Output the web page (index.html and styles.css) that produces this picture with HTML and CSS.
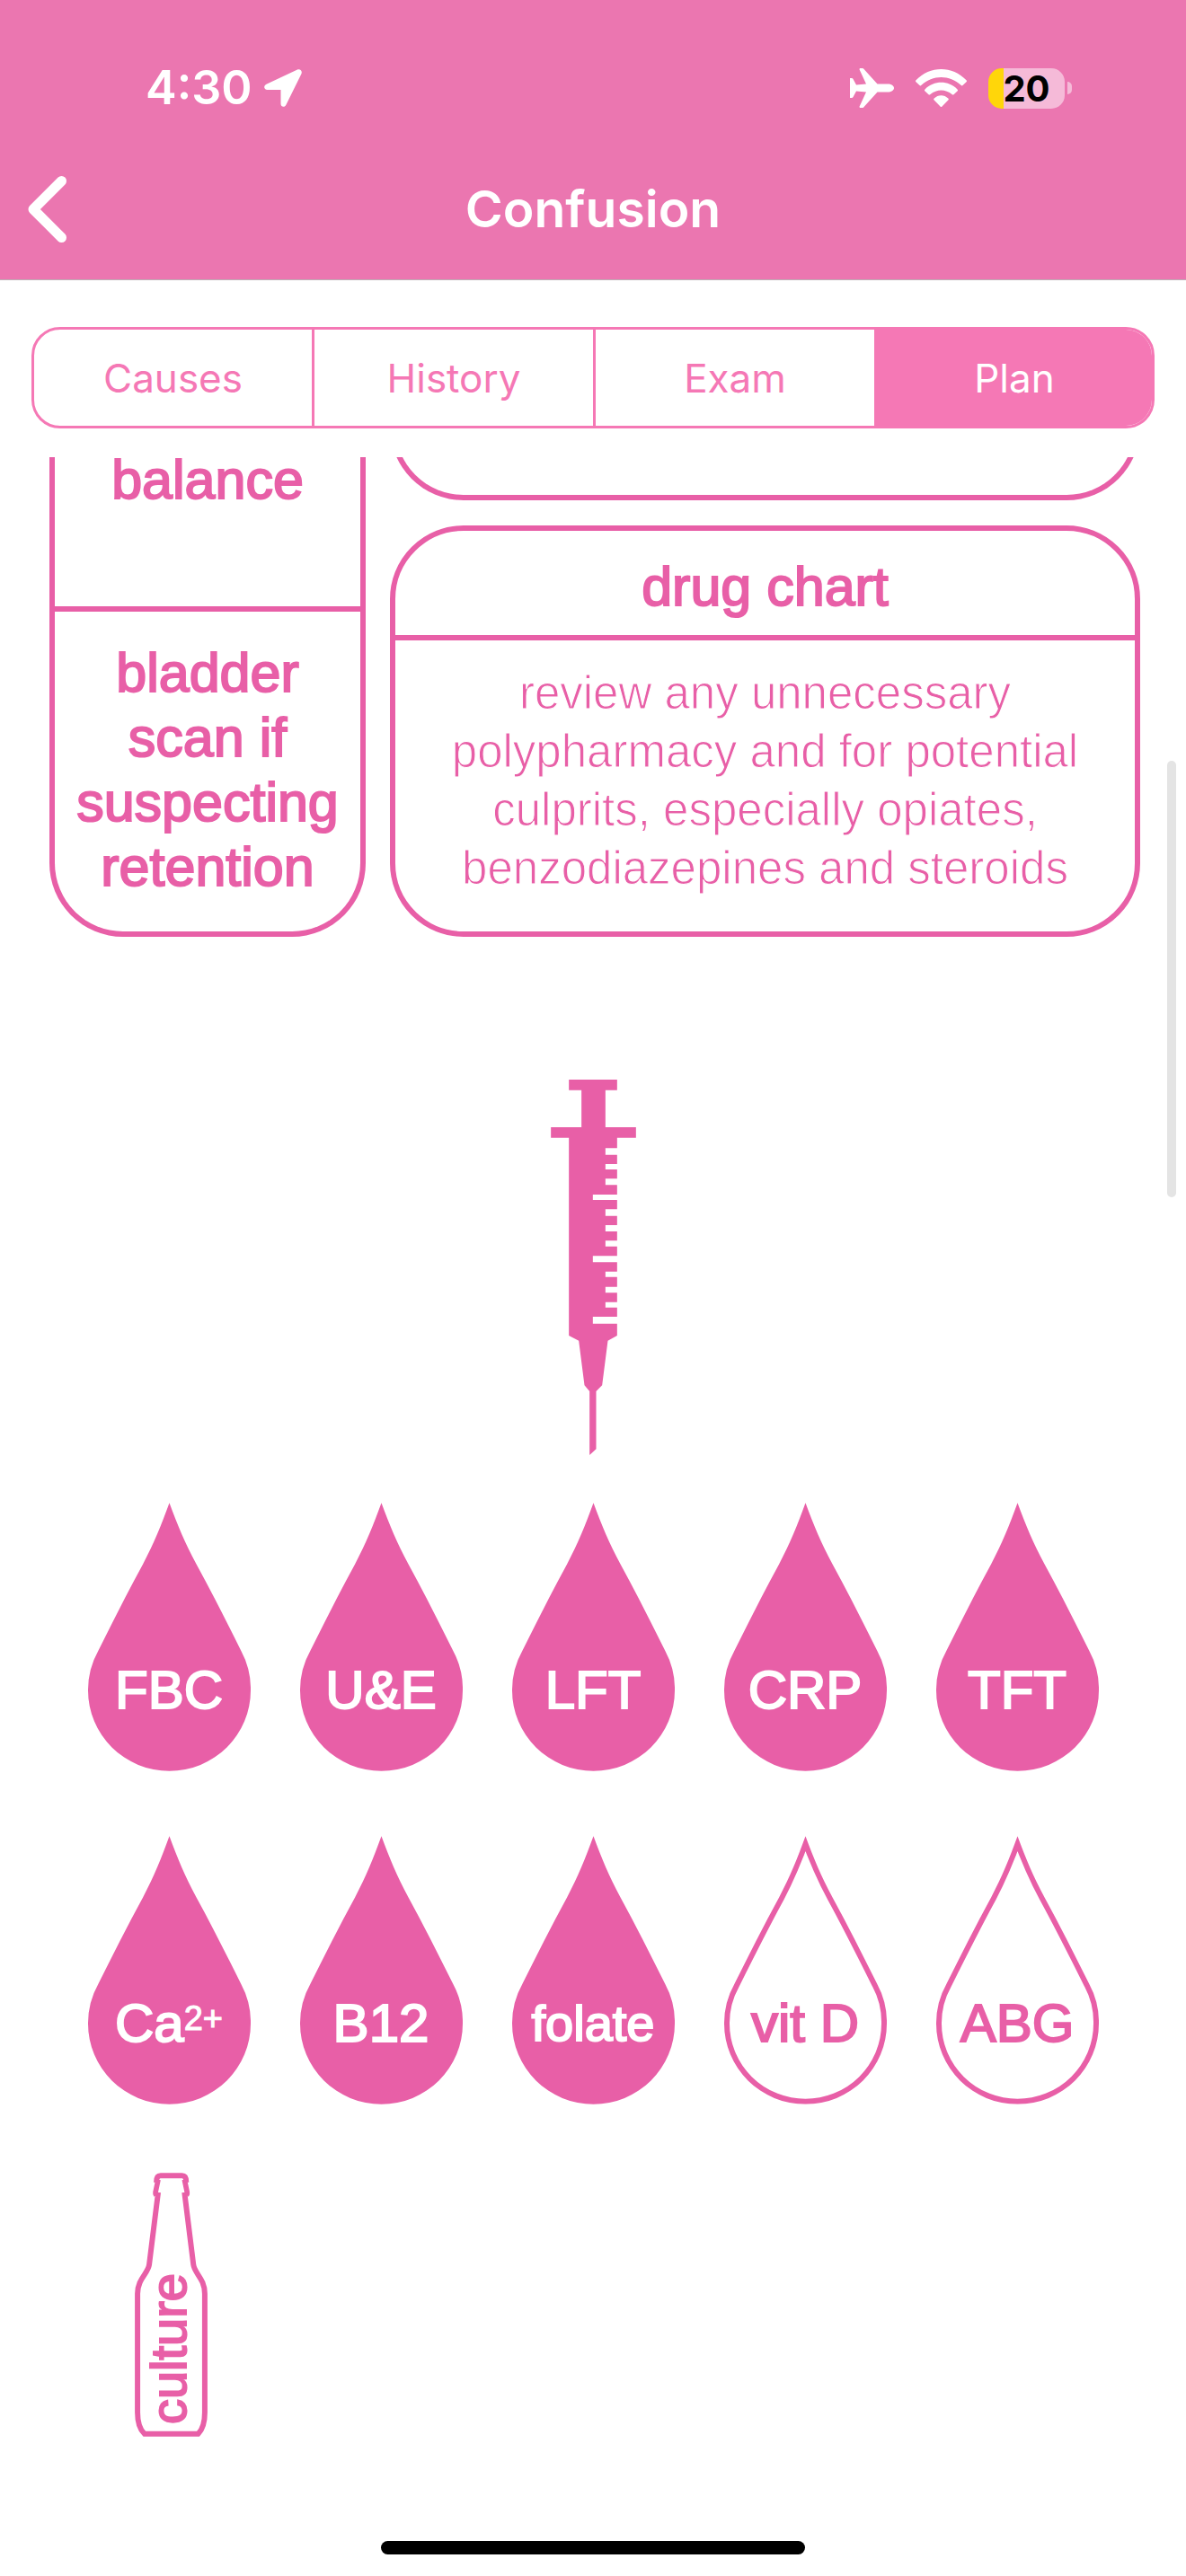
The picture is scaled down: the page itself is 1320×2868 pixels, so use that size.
FILE: index.html
```html
<!DOCTYPE html>
<html lang="en">
<head>
<meta charset="utf-8">
<meta name="viewport" content="width=device-width, initial-scale=1">
<title>Confusion</title>
<link rel="stylesheet" href="styles.css">
</head>
<body>
<svg class="defs" width="0" height="0" aria-hidden="true">
  <defs>
    <path id="drop-shape" d="M385 68C412 142 438 204 475 272C526 365 575 463 625 563A272 270 0 0 1 657 695A272 270 0 0 1 113 695A272 270 0 0 1 147 563C197 463 246 365 297 272C334 202 358 142 385 68Z"/>
    <clipPath id="drop-clip"><use href="#drop-shape"/></clipPath>
    <symbol id="drop-filled" viewBox="113 68 544 897"><use href="#drop-shape" fill="currentColor"/></symbol>
    <symbol id="drop-outline" viewBox="113 68 544 897"><use href="#drop-shape" fill="none" stroke="currentColor" stroke-width="36" stroke-miterlimit="10" clip-path="url(#drop-clip)"/></symbol>
  </defs>
</svg>

<header class="header">
  <div class="status">
    <div class="status-left">
      <time class="clock">4:30</time>
      <svg class="icon-location" viewBox="0 0 42 42" aria-hidden="true"><path d="M36.500 .7L2.500 16.800C-1.200 18.700 -.2 23 3.500 23H18.500V38.500C18.500 42.300 23 43 24.500 39.500L41.300 5.500C43 1.800 40 -.9 36.500 .7Z" fill="currentColor"/></svg>
    </div>
    <div class="status-right">
      <svg class="icon-plane" viewBox="0 0 49 44" aria-hidden="true"><path d="M10.500 1.200C10.500 .4 11 0 12 0H13.500C14.600 0 15.300 .5 16 1.500L30.500 17.500H42C46 17.500 49 19.500 49 22S46 26.500 42 26.500H30.500L16 42.500C15.300 43.500 14.600 44 13.500 44H12C11 44 10.500 43.600 10.500 42.800L18 26.500L7 25.500L3.500 32C3 32.800 2.500 33 1.500 33H0V11H1.500C2.500 11 3 11.200 3.500 12L7 18.500L18 17.500Z" fill="currentColor"/></svg>
      <svg class="icon-wifi" viewBox="0 0 57 42" aria-hidden="true"><g fill="currentColor"><path d="M.5 12.300C16 -4.100 41 -4.100 56.500 12.300C57.200 13 57.100 13.700 56.500 14.300L52.500 18C51.800 18.600 51.200 18.500 50.500 17.800C38 6 19 6 6.500 17.800C5.800 18.500 5.200 18.600 4.500 18L.5 14.300C-.1 13.700 -.2 13 .5 12.300Z"/><path d="M10.500 22.500C20.500 12.300 36.500 12.300 46.500 22.500C47.200 23.200 47.200 23.900 46.500 24.500L42.500 28.200C41.800 28.800 41.200 28.700 40.500 28C33.500 22 23.500 22 16.500 28C15.800 28.700 15.200 28.800 14.500 28.200L10.500 24.500C9.800 23.900 9.800 23.200 10.500 22.500Z"/><path d="M20.700 32.500C25 28 32 28 36.300 32.500C37 33.200 37 33.900 36.300 34.600L29.500 41.400C28.800 42.100 28.200 42.100 27.500 41.400L20.700 34.600C20 33.900 20 33.200 20.700 32.500Z"/></g></svg>
      <div class="battery"><span class="battery-body">20</span><span class="battery-nub"></span></div>
    </div>
  </div>
  <div class="titlebar">
    <button class="back" type="button" aria-label="Back">
      <svg class="icon-back" viewBox="0 0 43 74" aria-hidden="true"><path d="M37.500 5.500L6 37L37.500 68.500" fill="none" stroke="currentColor" stroke-width="11" stroke-linecap="round" stroke-linejoin="round"/></svg>
    </button>
    <h1 class="title">Confusion</h1>
  </div>
</header>

<nav class="tabs" aria-label="Sections">
  <button class="tab" type="button">Causes</button>
  <button class="tab" type="button">History</button>
  <button class="tab" type="button">Exam</button>
  <button class="tab tab-active" type="button" aria-current="page">Plan</button>
</nav>

<main class="content">
  <section class="cards">
    <article class="card card-side">
      <p class="card-item">balance</p>
      <p class="card-item card-item-last">bladder scan if suspecting retention</p>
    </article>
    <div class="card-column">
      <div class="card card-previous"></div>
      <article class="card">
        <h2 class="card-title">drug chart</h2>
        <p class="card-text">review any unnecessary polypharmacy and for potential culprits, especially opiates, benzodiazepines and steroids</p>
      </article>
    </div>
  </section>

  <svg class="syringe" viewBox="100 66 284 1254" role="img" aria-label="Blood tests"><path fill="currentColor" d="M160 66H321V101H282V225H384V260H321V295H282V317H321V348H282V366H321V397H282V418H321V450H240V468H321V499H282V521H321V552H282V573H321V604H282V623H321V655H240V676H321V707H282V725H321V758H282V778H321V809H282V827H321V858H240V881H321V921L290 938L271 1087L251 1107V1300L229 1320V1107L212 1087L193 938L160 921V260H100V225H202V101H160Z"/></svg>

  <ul class="tests">
    <li class="test"><svg class="drop" aria-hidden="true"><use href="#drop-filled"/></svg><span class="label">FBC</span></li>
    <li class="test"><svg class="drop" aria-hidden="true"><use href="#drop-filled"/></svg><span class="label">U&amp;E</span></li>
    <li class="test"><svg class="drop" aria-hidden="true"><use href="#drop-filled"/></svg><span class="label">LFT</span></li>
    <li class="test"><svg class="drop" aria-hidden="true"><use href="#drop-filled"/></svg><span class="label">CRP</span></li>
    <li class="test"><svg class="drop" aria-hidden="true"><use href="#drop-filled"/></svg><span class="label">TFT</span></li>
    <li class="test"><svg class="drop" aria-hidden="true"><use href="#drop-filled"/></svg><span class="label">Ca<sup class="charge">2+</sup></span></li>
    <li class="test"><svg class="drop" aria-hidden="true"><use href="#drop-filled"/></svg><span class="label">B12</span></li>
    <li class="test"><svg class="drop" aria-hidden="true"><use href="#drop-filled"/></svg><span class="label label-small">folate</span></li>
    <li class="test"><svg class="drop" aria-hidden="true"><use href="#drop-outline"/></svg><span class="label label-outline">vit D</span></li>
    <li class="test"><svg class="drop" aria-hidden="true"><use href="#drop-outline"/></svg><span class="label label-outline">ABG</span></li>
    <li class="test">
      <svg class="bottle" viewBox="150 87 243 884" aria-hidden="true"><g fill="none" stroke="currentColor" stroke-width="18"><path d="M222 119C222 104 226 97 236 97H308C318 97 322 104 322 119"/><path d="M228 110L219 153Q218 158 221 162M316 110L325 153Q326 158 323 162" stroke-width="17"/><path d="M228 153L198 395C194 425 159 442 159 492V890C159 922 167 947 182 961H362C376 947 384 922 384 890V492C384 442 350 425 346 395L316 153"/></g></svg>
      <span class="bottle-label">culture</span>
    </li>
  </ul>
</main>

<div class="scrollbar" aria-hidden="true"></div>
<footer class="home"><div class="home-bar"></div></footer>
</body>
</html>
```
FILE: styles.css
```css
:root {
  --pink: #e85fa7;
  --pink-light: #f578b5;
  --pink-bar: #eb76b0;
  --helvetica: "Liberation Sans", Arial, sans-serif;
  --system: Inter, sans-serif;
}

* {
  box-sizing: border-box;
}

body {
  position: relative;
  display: flex;
  flex-direction: column;
  min-height: 100vh;
  margin: 0;
  background: #fff;
  color: var(--pink);
  font-family: var(--helvetica);
}

h1, h2, p, ul {
  margin: 0;
  padding: 0;
}

button {
  margin: 0;
  border: 0;
  background: none;
  color: inherit;
  font: inherit;
}

svg {
  display: block;
}

.defs {
  position: absolute;
}

/* Header */

.header {
  border-bottom: 1px solid #bbb0b5;
  background: var(--pink-bar);
  color: #fff;
  font-family: var(--system);
}

.status {
  display: flex;
  align-items: center;
  justify-content: space-between;
  height: 155px;
  padding: 41px 127px 0 162px;
}

.status-left,
.status-right {
  display: flex;
  align-items: center;
}

.status-left {
  gap: 13px;
}

.status-right {
  gap: 24px;
}

.clock {
  font-size: 52px;
  font-weight: 600;
  line-height: 60px;
}

.icon-location {
  width: 42px;
  height: 42px;
}

.icon-plane {
  width: 49px;
  height: 44px;
}

.icon-wifi {
  width: 57px;
  height: 42px;
}

.battery {
  display: flex;
  align-items: center;
  gap: 3px;
}

.battery-body {
  width: 85px;
  height: 45px;
  border-radius: 15px;
  background: linear-gradient(to right, #ffd60a 17px, #f5bad8 17px);
  color: #000;
  font-size: 40px;
  font-weight: 700;
  line-height: 45px;
  text-align: center;
}

.battery-nub {
  width: 5px;
  height: 14px;
  border-radius: 0 5px 5px 0;
  background: #f5bad8;
}

.titlebar {
  display: grid;
  grid-template-columns: 1fr auto 1fr;
  align-items: center;
  height: 156px;
  padding: 0 31px;
}

.back {
  justify-self: start;
  padding: 0;
}

.icon-back {
  width: 43px;
  height: 74px;
}

.title {
  font-size: 57px;
  font-weight: 600;
  line-height: 72px;
}

/* Section tabs */

.tabs {
  display: grid;
  grid-template-columns: 309fr 313fr 313fr 309fr;
  margin: 52px 35px 32px;
  overflow: hidden;
  border: 3px solid var(--pink-light);
  border-radius: 32px;
  color: var(--pink-light);
  font-family: var(--system);
}

.tab {
  height: 107px;
  padding: 0;
  font-size: 44px;
  line-height: 52px;
}

.tab + .tab {
  border-left: 3px solid var(--pink-light);
}

.tab-active {
  background: var(--pink-light);
  color: #fff;
}

/* Scrolled plan */

.content {
  flex: 1;
}

.cards {
  display: grid;
  grid-template-columns: 352fr 835fr;
  gap: 27px;
  margin: 0 51px 0 55px;
}

.card-column {
  display: flex;
  flex-direction: column;
  gap: 28px;
  margin-top: -52px;
}

.card {
  border: 6px solid var(--pink);
  border-radius: 82px;
}

.card-column .card:last-child {
  flex: 1;
}

/* The card above is scrolled away except for its lower edge */
.card-previous {
  height: 100px;
  clip-path: inset(52px 0 0);
}

.card-previous,
.card-side {
  border-top: 0;
  border-radius: 0 0 82px 82px;
}

.card-item,
.card-title {
  border-bottom: 6px solid var(--pink);
  font-size: 61px;
  font-weight: 400;
  line-height: 72px;
  text-align: center;
  -webkit-text-stroke: 2px currentColor;
}

.card-item {
  padding: 0 24px 116px;
  line-height: 50px;
}

.card-item-last {
  padding: 32px 20px 36px;
  border-bottom: 0;
  line-height: 72px;
}

.card-title {
  padding: 26px 24px 18px;
}

.card-text {
  padding: 26px 50px 38px;
  font-size: 51px;
  line-height: 65px;
  text-align: center;
  -webkit-text-stroke: 1px #fff;
}

.syringe {
  width: 95px;
  height: 418px;
  margin: 159px auto 53px;
}

/* Test drops */

.tests {
  display: grid;
  grid-template-columns: repeat(5, 1fr);
  gap: 72px 0;
  padding: 0 70px;
  list-style: none;
}

.test {
  display: grid;
  place-items: center;
}

.test > * {
  grid-area: 1 / 1;
}

.drop {
  width: 181px;
  height: 299px;
}

.label {
  align-self: end;
  padding-bottom: 54px;
  color: #fff;
  font-size: 60px;
  line-height: 72px;
  white-space: nowrap;
  -webkit-text-stroke: 2px currentColor;
}

.label-small {
  font-size: 56px;
}

.label-outline {
  color: var(--pink);
}

.charge {
  font-size: 38px;
  line-height: 0;
  vertical-align: 13px;
  -webkit-text-stroke: 1px currentColor;
}

.bottle {
  width: 81px;
  height: 294px;
  margin: 4px 0 0 4px;
}

.bottle-label {
  padding-bottom: 102px;
  font-size: 56px;
  line-height: 60px;
  writing-mode: vertical-rl;
  transform: rotate(180deg);
  -webkit-text-stroke: 2px currentColor;
}

/* Overlays and home indicator */

.scrollbar {
  position: absolute;
  top: 847px;
  right: 11px;
  width: 10px;
  height: 486px;
  border-radius: 5px;
  background: #e4e4e4;
}

.home {
  padding: 24px 0;
}

.home-bar {
  width: 472px;
  height: 15px;
  margin: 0 auto;
  border-radius: 8px;
  background: #000;
}
```
